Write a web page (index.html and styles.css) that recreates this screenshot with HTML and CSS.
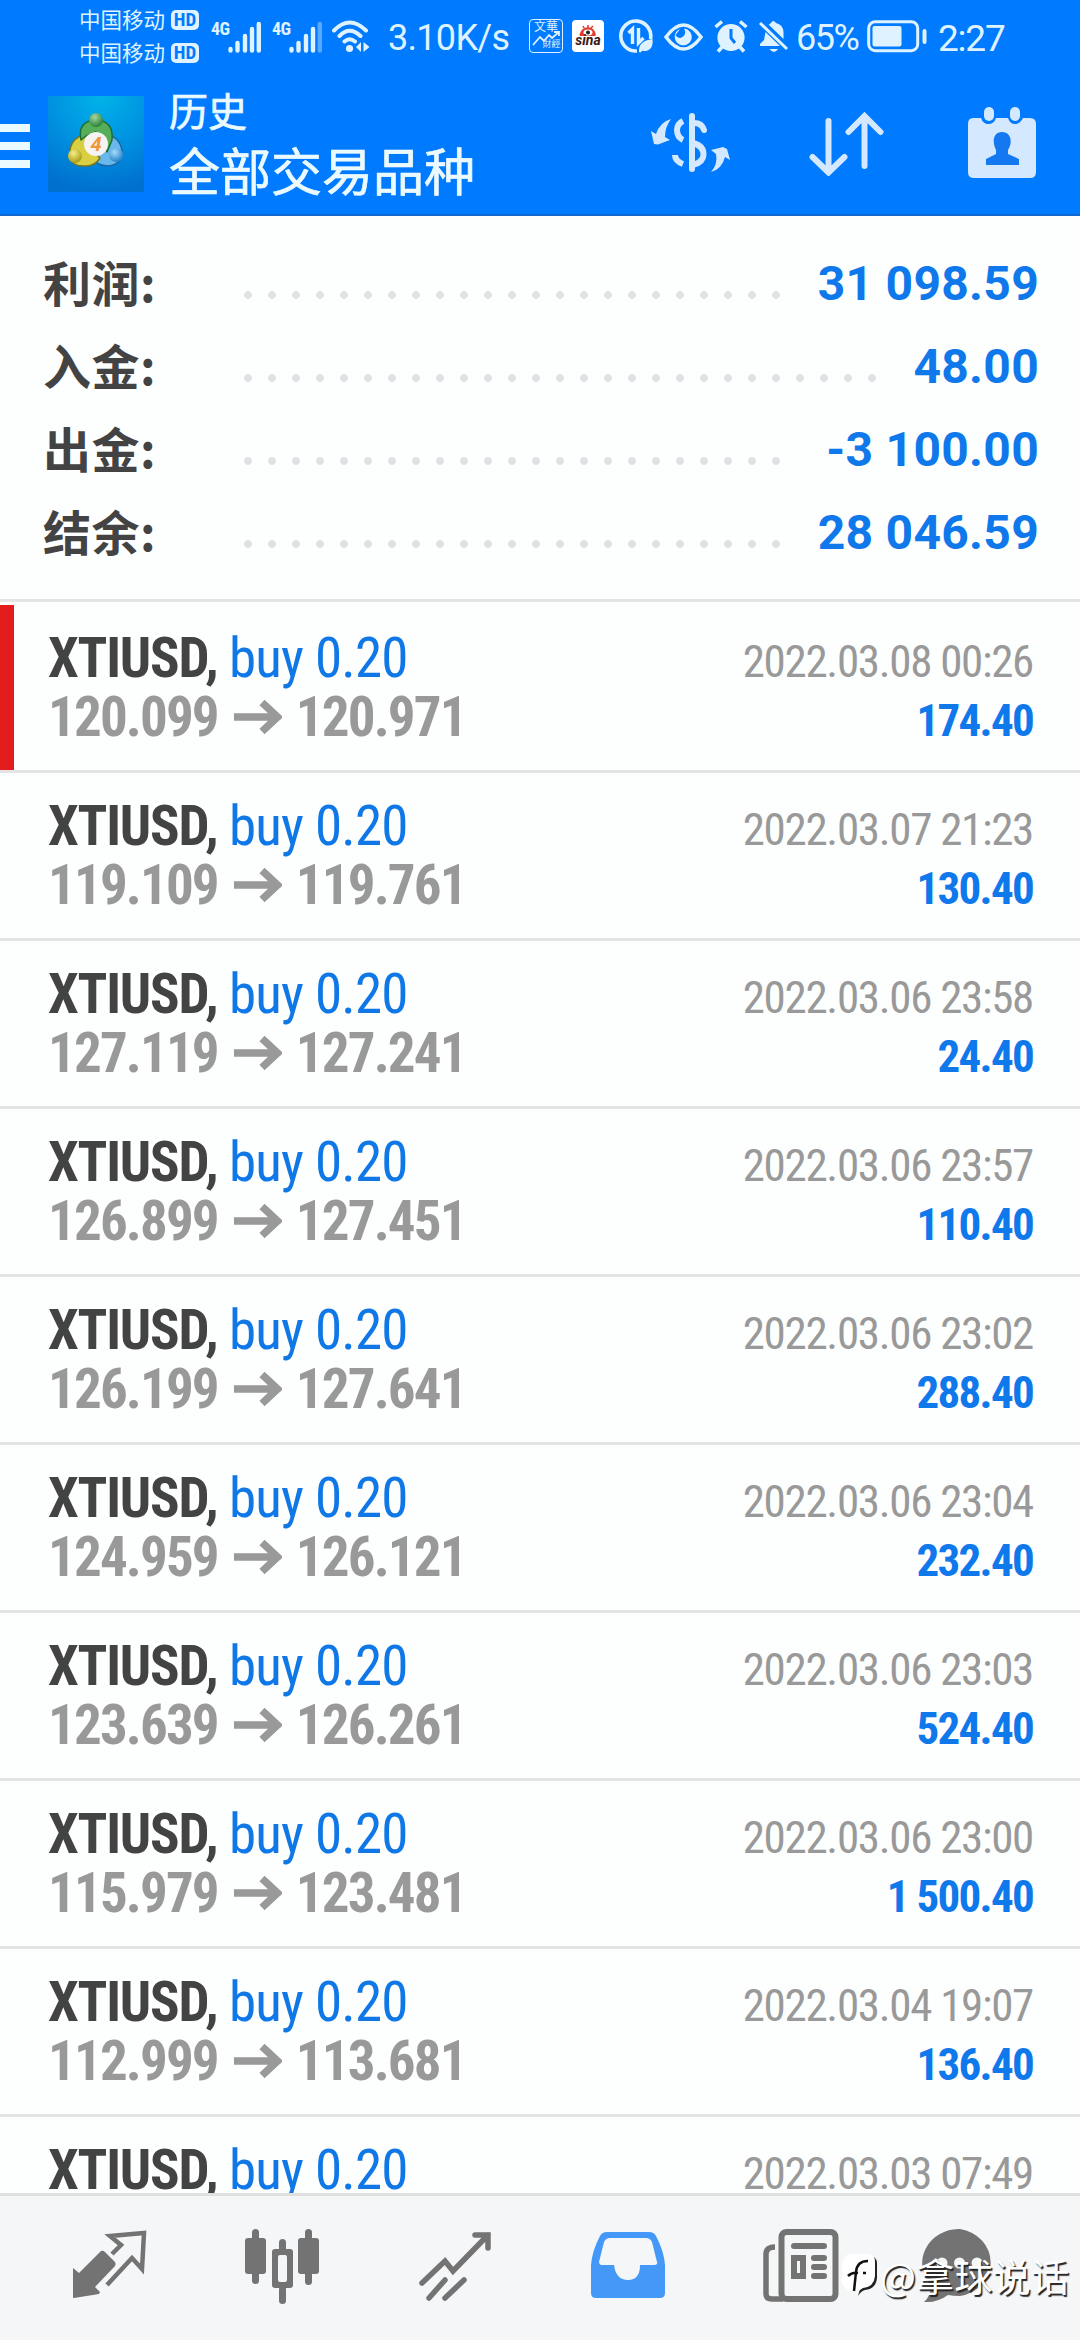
FILE: index.html
```html
<!DOCTYPE html>
<html lang="zh-CN">
<head>
<meta charset="utf-8">
<title>历史</title>
<link rel="stylesheet" href="styles.css">
</head>
<body>
<svg width="0" height="0" class="defs" aria-hidden="true">
  <symbol id="arrow" viewBox="0 0 48 34"><path d="M0 17H42M28 2.500L43.500 17L28 31.500" fill="none" stroke="currentColor" stroke-width="7.500"/></symbol>
</svg>
<header class="top">
  <div class="status">
    <div class="carriers">
      <div class="carrier"><span>中国移动</span><b>HD</b></div>
      <div class="carrier"><span>中国移动</span><b>HD</b></div>
    </div>
    <div class="signal"><span class="net">4G</span><svg width="33" height="32" viewBox="0 0 33 32" stroke="currentColor" stroke-width="4.400" stroke-linecap="round"><path d="M2.500 28v1.500M9.500 22v7.500M17 15v14.500M24 8v21.500M30.800 3v26.500"/></svg></div>
    <div class="signal"><span class="net">4G</span><svg width="33" height="32" viewBox="0 0 33 32" stroke="currentColor" stroke-width="4.400" stroke-linecap="round"><path d="M2.500 28v1.500M9.500 22v7.500M17 15v14.500M24 8v21.500"/><path d="M30.800 3v26.500" opacity=".4"/></svg></div>
    <svg class="wifi" width="38" height="33" viewBox="0 0 38 33"><g fill="none" stroke="currentColor" stroke-width="4" stroke-linecap="round"><path d="M2 10.500Q17.500-5.500 34 10.500M7.500 16Q17.500 5.500 28.500 16M12.500 21.500Q17.500 17 23 21.500"/></g><circle cx="17.500" cy="28.500" r="3.600" fill="currentColor"/><path d="M29 22v10l-5-5zM31.500 22v10l6-5z" fill="currentColor"/></svg>
    <span class="speed">3.10K/s</span>
    <div class="wenhua"><span>文華</span><svg width="28" height="15" viewBox="0 0 28 15" fill="none" stroke="currentColor" stroke-width="1.800"><path d="M1 14L8 6L12 10L17 4L20 7L27 1M22 1h5v4"/></svg><span class="low">財經</span></div>
    <div class="sina"><svg width="18" height="11" viewBox="0 0 18 11"><path d="M1 10Q3 3 9 3Q15 3 16 10Q9 13 1 10M5 3L4 1M9 3V0M12 3L14 1" fill="#e33b2c" stroke="#e33b2c" stroke-width="1.500"/><ellipse cx="9" cy="7.500" rx="4.500" ry="3" fill="#fff"/><circle cx="9" cy="7.500" r="2" fill="#222"/></svg><i>sina</i></div>
    <svg class="data" width="35" height="35" viewBox="0 0 35 35"><g fill="none" stroke="currentColor"><path d="M18 32A15 15 0 1 1 31.500 20" stroke-width="3.600"/><path d="M9.500 14L13.500 10V25M19.500 9V24L24.500 19" stroke-width="3.400"/></g><path d="M20 33Q19 22 33.500 20Q35 33 23 32L29 25L21.500 33.500Z" fill="currentColor"/></svg>
    <svg class="eye" width="39" height="28" viewBox="0 0 39 28"><path d="M2 14Q19.500-10 37 14Q19.500 38 2 14Z" fill="none" stroke="currentColor" stroke-width="3.500"/><path d="M16 6A8.500 8.500 0 1 0 27.500 16A8.500 8.500 0 0 0 20 5.500Q23 11 18.500 14Q14 16.500 11.500 12" fill="currentColor"/></svg>
    <svg class="alarm" width="34" height="33" viewBox="0 0 34 33"><circle cx="17" cy="17.500" r="13.600" fill="currentColor"/><path d="M1.500 7L8 1.500M32.500 7L26 1.500M4 31.500L9 26M30 31.500L25 26" stroke="currentColor" stroke-width="3.600"/><path d="M17 9V18L21 23" fill="none" stroke="#007aff" stroke-width="3"/></svg>
    <svg class="bell" width="30" height="33" viewBox="0 0 30 33" fill="currentColor"><path d="M6.500 12L21 26H1V24L5 20ZM9.500 5L12 3Q14-1 17 3Q24 4.500 24.500 12V19L10 5ZM10.500 29H19Q15 35 10.500 29Z"/><path d="M1 3L28 29" stroke="currentColor" stroke-width="3"/></svg>
    <span class="percent">65%</span>
    <svg class="battery" width="60" height="33" viewBox="0 0 60 33"><rect x="1.700" y="1.700" width="49" height="29" rx="6.500" fill="none" stroke="currentColor" stroke-width="3"/><rect x="5.500" y="6" width="29" height="20.500" rx="2" fill="currentColor"/><rect x="55.500" y="9" width="4" height="15" rx="2" fill="currentColor"/></svg>
    <span class="clock">2:27</span>
  </div>
  <div class="appbar">
    <div class="menu"><span></span><span></span><span></span></div>
    <svg class="logo" width="96" height="96" viewBox="0 0 96 96">
      <defs>
        <radialGradient id="sky" cx=".55" cy="0" r="1"><stop offset="0" stop-color="#00b4e8"/><stop offset=".55" stop-color="#0090e0"/><stop offset="1" stop-color="#0070cf"/></radialGradient>
        <radialGradient id="gr" cx=".4" cy=".3" r=".7"><stop offset="0" stop-color="#a5d8a0"/><stop offset="1" stop-color="#28803a"/></radialGradient>
        <radialGradient id="ye" cx=".4" cy=".3" r=".7"><stop offset="0" stop-color="#f6ef85"/><stop offset="1" stop-color="#a89a18"/></radialGradient>
        <radialGradient id="bl" cx=".4" cy=".3" r=".7"><stop offset="0" stop-color="#a4dcfa"/><stop offset="1" stop-color="#2683c8"/></radialGradient>
      </defs>
      <rect width="96" height="96" fill="url(#sky)"/>
      <g stroke-linejoin="round">
        <path d="M42 52L56 38Q72 40 74 55Q74 69 60 70Q49 70 42 60Z" fill="#68b8ec" stroke="#1b66a5" stroke-width="1.500"/>
        <path d="M41 38Q24 40 22 54L21 62Q26 71 38 70Q47 70 52 62L40 50Z" fill="#d8cf42" stroke="#77761c" stroke-width="1.500"/>
        <path d="M33 44Q29 25 48 24Q66 25 64 44L59 56L48 36L38 40Z" fill="#56ae58" stroke="#1d6b36" stroke-width="1.500"/>
      </g>
      <circle cx="48" cy="24" r="7" fill="url(#gr)"/><circle cx="27" cy="60" r="7" fill="url(#ye)"/><circle cx="68" cy="59" r="7" fill="url(#bl)"/>
      <circle cx="48" cy="48" r="12" fill="#f6f4f2"/>
      <text x="48" y="55" text-anchor="middle" font-family="Roboto, sans-serif" font-style="italic" font-weight="700" font-size="20" fill="#ee963c">4</text>
    </svg>
    <div class="titles"><div class="small">历史</div><div class="big">全部交易品种</div></div>
    <svg class="currency" width="80" height="62" viewBox="0 0 80 62"><g fill="none" stroke="currentColor"><path d="M41 4V57" stroke-width="6" stroke-linecap="round"/><path d="M32 9Q26 12 26 18Q26 25 32 28M32 52Q24 49 24 43" stroke-width="6"/><path d="M43 11Q51 11 53 18" stroke-width="6" stroke-linecap="round"/><path d="M42 31Q53 34 52.500 43Q52 50 43 52.500" stroke-width="6"/></g><path d="M20 7Q9 10 5 22L0 19L3 32L7 32.500L19 28L14 25Q14 15 20 7ZM60 60Q71 57 74 45L79 48L76 37L72 35L60 38L65 42Q67 52 60 60Z" fill="currentColor"/></svg>
    <svg class="sort" width="76" height="64" viewBox="0 0 76 64" fill="none" stroke="currentColor" stroke-width="6" stroke-linecap="round"><path d="M19.500 9V59M3.500 45L19.500 60.500L35.500 45M55.500 54V5M39.500 20L55.500 4L71.500 20"/></svg>
    <svg class="calendar" width="70" height="72" viewBox="0 0 70 72"><path d="M6 11H14Q16 17 21.500 17T29 11H41Q43 17 48 17T56 11H63Q69 11 69 17V65Q69 71 63 71H7Q1 71 1 65V17Q1 11 6 11Z" fill="currentColor"/><rect x="17" y="0" width="10" height="14" rx="5" fill="currentColor"/><rect x="43" y="0" width="10" height="14" rx="5" fill="currentColor"/><path d="M35 25C26 25 25 35 29 43V47L19 52V58H52V52L41 47V43C46 35 44 25 35 25Z" fill="#1478f0"/></svg>
  </div>
</header>
<section class="summary">
  <div class="sum"><span class="label">利润:</span><span class="dots" style="width:552px"></span><span class="value">31 098.59</span></div>
  <div class="sum"><span class="label">入金:</span><span class="dots" style="width:648px"></span><span class="value">48.00</span></div>
  <div class="sum"><span class="label">出金:</span><span class="dots" style="width:552px"></span><span class="value">-3 100.00</span></div>
  <div class="sum"><span class="label">结余:</span><span class="dots" style="width:552px"></span><span class="value">28 046.59</span></div>
</section>
<main class="deals">
  <article class="deal current"><div class="line"><span class="name">XTIUSD, <em>buy 0.20</em></span><time>2022.03.08 00:26</time></div><div class="line"><span class="price">120.099<svg class="to"><use href="#arrow"/></svg>120.971</span><span class="profit">174.40</span></div></article>
  <article class="deal"><div class="line"><span class="name">XTIUSD, <em>buy 0.20</em></span><time>2022.03.07 21:23</time></div><div class="line"><span class="price">119.109<svg class="to"><use href="#arrow"/></svg>119.761</span><span class="profit">130.40</span></div></article>
  <article class="deal"><div class="line"><span class="name">XTIUSD, <em>buy 0.20</em></span><time>2022.03.06 23:58</time></div><div class="line"><span class="price">127.119<svg class="to"><use href="#arrow"/></svg>127.241</span><span class="profit">24.40</span></div></article>
  <article class="deal"><div class="line"><span class="name">XTIUSD, <em>buy 0.20</em></span><time>2022.03.06 23:57</time></div><div class="line"><span class="price">126.899<svg class="to"><use href="#arrow"/></svg>127.451</span><span class="profit">110.40</span></div></article>
  <article class="deal"><div class="line"><span class="name">XTIUSD, <em>buy 0.20</em></span><time>2022.03.06 23:02</time></div><div class="line"><span class="price">126.199<svg class="to"><use href="#arrow"/></svg>127.641</span><span class="profit">288.40</span></div></article>
  <article class="deal"><div class="line"><span class="name">XTIUSD, <em>buy 0.20</em></span><time>2022.03.06 23:04</time></div><div class="line"><span class="price">124.959<svg class="to"><use href="#arrow"/></svg>126.121</span><span class="profit">232.40</span></div></article>
  <article class="deal"><div class="line"><span class="name">XTIUSD, <em>buy 0.20</em></span><time>2022.03.06 23:03</time></div><div class="line"><span class="price">123.639<svg class="to"><use href="#arrow"/></svg>126.261</span><span class="profit">524.40</span></div></article>
  <article class="deal"><div class="line"><span class="name">XTIUSD, <em>buy 0.20</em></span><time>2022.03.06 23:00</time></div><div class="line"><span class="price">115.979<svg class="to"><use href="#arrow"/></svg>123.481</span><span class="profit">1 500.40</span></div></article>
  <article class="deal"><div class="line"><span class="name">XTIUSD, <em>buy 0.20</em></span><time>2022.03.04 19:07</time></div><div class="line"><span class="price">112.999<svg class="to"><use href="#arrow"/></svg>113.681</span><span class="profit">136.40</span></div></article>
  <article class="deal"><div class="line"><span class="name">XTIUSD, <em>buy 0.20</em></span><time>2022.03.03 07:49</time></div></article>
</main>
<nav class="tabs">
  <svg class="tab" viewBox="0 0 76 76"><path d="M2 39L8 44L30 22Q32 21 34 23L44 33Q45 35 44 37L24 58L29 63L28 65L3 69H2Z" fill="currentColor"/><path d="M41 25L50 16L39 7L73 4L71 40L61 29L36 56" fill="none" stroke="currentColor" stroke-width="4.500"/></svg>
  <svg class="tab" viewBox="0 0 76 76" fill="currentColor"><rect x="1" y="9" width="21" height="36" rx="3"/><rect x="8" y="0" width="7" height="55" rx="3.500"/><rect x="54" y="9" width="21" height="36" rx="3"/><rect x="61" y="0" width="7" height="56" rx="3.500"/><path d="M31 20H46Q49 20 49 23V56Q49 59 46 59H31Q28 59 28 56V23Q28 20 31 20ZM36 26Q34 26 34 28V51Q34 53 36 53H41Q43 53 43 51V28Q43 26 41 26Z" fill-rule="evenodd"/><path d="M35 21V13.500a3.500 3.500 0 0 1 7 0V21Z"/><rect x="35" y="57" width="7" height="18" rx="3.500"/></svg>
  <svg class="tab" viewBox="0 0 76 76" fill="none" stroke="currentColor" stroke-width="5.500" stroke-linecap="round"><path d="M5 54L28 32L36 42L71 6M58 6H71V19M12 69L28 51M28 69L47 51" stroke-linejoin="miter"/></svg>
  <svg class="tab active" viewBox="0 0 76 76"><path d="M17 3H59Q64 3 66 7Q74 22 75 36V64Q75 69 70 69H6Q1 69 1 64V36Q2 22 10 7Q12 3 17 3ZM20 9Q16 9 14 13L9 33Q9 35 11 36H24Q26 51 38 51T50 36H65Q68 35 67 33L62 13Q60 9 56 9Z" fill="currentColor" fill-rule="evenodd"/></svg>
  <svg class="tab" viewBox="0 0 76 76"><g fill="none" stroke="currentColor"><rect x="18.500" y="3" width="54" height="67" rx="5" stroke-width="6"/><path d="M12 18Q3 18 3 25V65Q3 70 9 70H20" stroke-width="5.500"/><path d="M31 17H61M51 29H61M51 38H61M51 47H61" stroke-width="6" stroke-linecap="round"/><rect x="31" y="29" width="9" height="18" stroke-width="6"/></g></svg>
  <svg class="tab chat" viewBox="0 0 76 76"><path d="M38 0A37 34 0 0 1 38 67Q31 67 26 66Q15 74 2 73Q9 67 9 56A37 34 0 0 1 38 0Z" fill="currentColor"/><circle cx="20" cy="34" r="5.500" fill="#f5f6f7"/><circle cx="37.500" cy="34" r="5.500" fill="#f5f6f7"/><circle cx="55" cy="34" r="5.500" fill="#f5f6f7"/></svg>
  <div class="mark"><svg width="38" height="44" viewBox="0 0 38 44"><path d="M12 3H29Q37 3 37 11V25Q36 36 25 37Q21 38 18 43L20 36Z" fill="#222"/><path d="M10 1H27Q35 1 35 9V23Q34 34 23 35L17 39Q5 38 2 31Q0 27 3 22Q-1 4 10 1Z" fill="#fff"/><path d="M28 8Q17 8 16 19L14 38M8 23Q12 19 18 20M23 20H26" fill="none" stroke="#111" stroke-width="2.500"/></svg><span>@拿球说话</span></div>
</nav>
</body>
</html>
```
FILE: styles.css
```css
* { box-sizing: border-box; }
body {
  margin: 0; width: 1080px; height: 2340px; overflow: hidden;
  display: flex; flex-direction: column; background: #fdfefe;
  font-family: Roboto, "Noto Sans CJK SC", sans-serif;
}
svg { display: block; flex: none; }
.defs { position: absolute; }

.top { height: 216px; flex: none; background: #007aff; border-bottom: 2px solid #1169cf; color: #def3ff; }
.status { height: 72px; display: flex; align-items: flex-start; padding-left: 79px; white-space: nowrap; }
.carriers { width: 132px; padding-top: 2px; }
.carrier { height: 33px; display: flex; align-items: center; gap: 6px; font: 21.500px/33px "Noto Sans CJK SC", sans-serif; }
.carrier b { width: 28px; height: 20px; margin-top: 2px; border-radius: 5px; background: #def3ff; color: #007aff; text-align: center; font: 700 19px/20px "Roboto Condensed", sans-serif; }
.signal { display: flex; margin-top: 21px; width: 61px; }
.net { width: 17px; font: 700 18px/16px "Roboto Condensed", sans-serif; letter-spacing: -.5px; }
.wifi { margin: 20px 0 0 -1px; }
.speed { width: 141px; margin-left: 18px; font-size: 36px; line-height: 43px; padding-top: 17px; letter-spacing: -.7px; }
.wenhua { width: 34px; height: 34px; margin-top: 19px; border: 1.500px solid; border-radius: 4px; display: grid; justify-items: center; align-content: start; font: 12px/12px "Noto Sans CJK TC", sans-serif; }
.wenhua svg { margin-top: -1px; }
.wenhua .low { margin: -7px 0 0 11px; font-size: 9px; line-height: 9px; }
.sina { width: 32px; height: 32px; margin: 20px 0 0 9px; border-radius: 4px; background: #fff; display: flex; flex-direction: column; align-items: center; padding-top: 5px; }
.sina i { font: italic 700 14px/12px Roboto, sans-serif; color: #3b1a18; margin-top: -2px; }
.data { margin: 19px 0 0 15px; }
.eye { margin: 23px 0 0 10px; }
.alarm { margin: 20px 0 0 11px; }
.bell { margin: 20px 0 0 11px; }
.percent { width: 72px; margin-left: 7px; padding-top: 17px; font-size: 36px; line-height: 43px; letter-spacing: -1.500px; }
.battery { margin: 20px 0 0 -1px; }
.clock { margin-left: 11px; padding-top: 17px; font-size: 37px; line-height: 43px; letter-spacing: -1.200px; }

.appbar { height: 142px; display: flex; align-items: flex-start; color: #d4e8ff; }
.menu { width: 30px; margin-top: 52px; display: grid; gap: 10px; }
.menu span { height: 8px; background: #eafaff; }
.logo { margin: 24px 0 0 18px; }
.titles { width: 482px; margin: 8px 0 0 25px; color: #ebfaff; font-family: "Noto Sans CJK SC", sans-serif; white-space: nowrap; -webkit-text-stroke: .7px #ebfaff; }
.small { font-size: 39px; line-height: 58px; }
.big { font-size: 51px; line-height: 62px; }
.currency { margin: 40px 0 0 0; }
.sort { margin: 40px 0 0 78px; }
.calendar { margin: 35px 0 0 82px; }

.summary { height: 386px; flex: none; padding: 25px 43px 0; border-bottom: 3px solid #e5e5e6; }
.sum { height: 83px; display: flex; align-items: center; }
.label { width: 193px; padding-bottom: 3px; font: 700 48px/80px "Noto Sans CJK SC", sans-serif; letter-spacing: .5px; color: #434343; }
.dots { height: 8px; margin-top: 25px; background: radial-gradient(circle, #e1e1e5 3.500px, transparent 4.300px) 0 0 / 24px 8px; }
.value { margin: 1px -2px 0 auto; font-size: 48px; font-weight: 700; letter-spacing: .3px; color: #0f78ea; }

.deals { height: 1591px; flex: none; padding-top: 3px; overflow: hidden; font-family: "Roboto Condensed", Roboto, sans-serif; }
.deal { height: 168px; padding: 24px 47px 0 48px; border-bottom: 3px solid #e4e4e5; }
.current { background: linear-gradient(#e31c1e, #e31c1e) left / 14px 100% no-repeat; }
.line { height: 59px; display: flex; justify-content: space-between; align-items: baseline; line-height: 58px; white-space: nowrap; }
.name { font-size: 55px; font-weight: 700; letter-spacing: -1.200px; color: #434343; }
.name em { font-style: normal; font-weight: 400; letter-spacing: -.8px; color: #0f78e6; }
.price { display: flex; align-items: center; font-size: 55px; font-weight: 700; letter-spacing: -1.850px; color: #999; }
.to { width: 48px; height: 34px; margin: 0 14px 0 16px; }
.deal time { font-size: 45px; letter-spacing: -1.300px; color: #999; }
.profit { font-size: 45px; font-weight: 700; letter-spacing: -1.700px; color: #0f78ea; }

.tabs { position: relative; flex: 1; display: flex; gap: 97px; padding: 33px 0 0 71px; align-items: flex-start; background: #f5f6f7; border-top: 3px solid #e0e0e1; color: #737373; }
.tab { width: 76px; height: 76px; }
.chat { margin-left: -14px; }
.active { color: #4499f8; }
.mark { position: absolute; left: 840px; top: 55px; display: flex; gap: 2px; align-items: center; color: #fff; font: 38px/48px "Noto Sans CJK SC", sans-serif; letter-spacing: .3px; text-shadow: 1.500px 1.500px 1px #222; white-space: nowrap; }
```
